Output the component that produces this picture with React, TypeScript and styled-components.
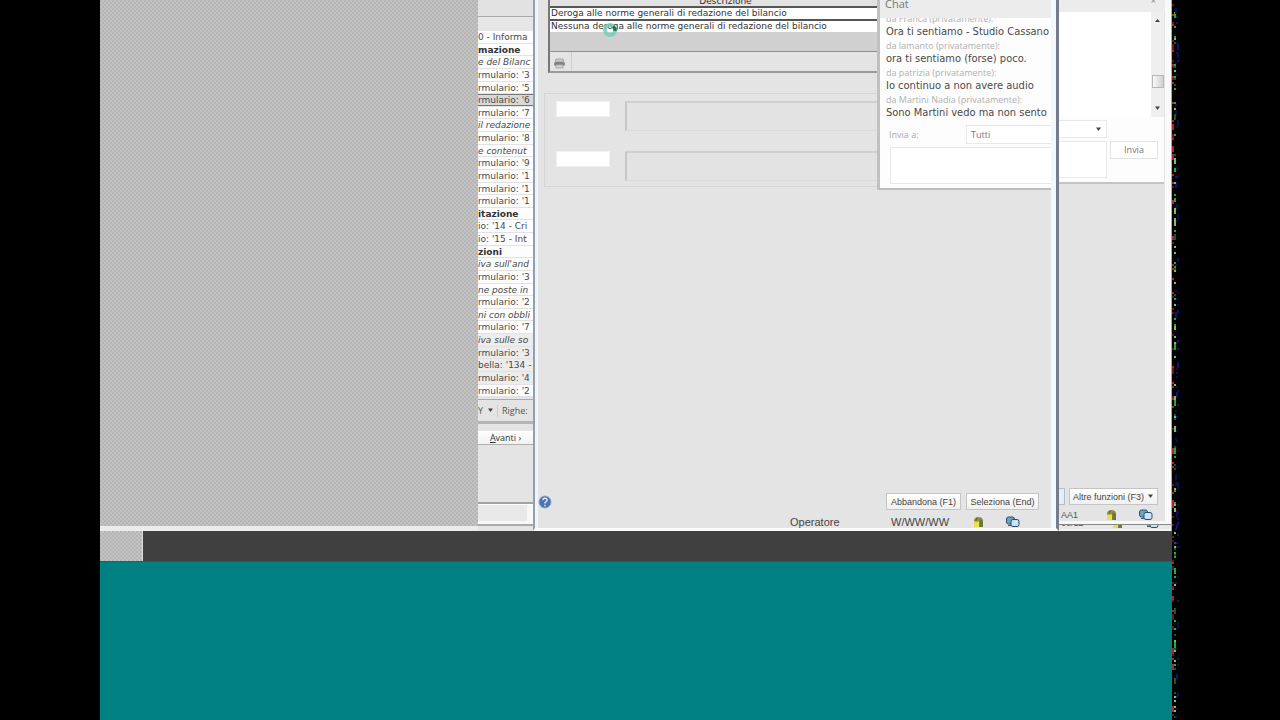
import React from 'react';
import styled, { createGlobalStyle, css } from 'styled-components';

const Global = createGlobalStyle`
  *, *::before, *::after { box-sizing: border-box; }
  body { margin: 0; background: #000; }
  button, input, textarea, select { font: inherit; color: inherit; margin: 0; padding: 0; border-radius: 0; }
  svg { display: block; flex: none; }
`;

const hatch = css`
  background-color: #bbb;
  background-image: conic-gradient(#c3c3c3 25%, #b5b5b5 0 50%, #c3c3c3 0 75%, #b5b5b5 0);
  background-size: 4px 4px;
`;

const Page = styled.div`
  display: flex;
  min-height: 100vh;
  padding-left: 100px;
  background: #000;
  font-family: 'DejaVu Sans', sans-serif;
  font-size: 9px;
  line-height: 12px;
  color: #333;
`;

const Desktop = styled.main`
  flex: 1;
  min-width: 0;
  display: flex;
  flex-direction: column;
`;

const Stage = styled.div`
  flex: 1;
  display: flex;
`;

const Backdrop = styled.div`
  flex: 0 0 378px;
  border-bottom: 5px solid #ececec;
  ${hatch}
`;

const Taskbar = styled.div`
  height: 31px;
  display: flex;
  background: #404040;
  border-bottom: 1px solid #2c5c5c;
`;

const TaskbarStart = styled.div`
  width: 43px;
  border-right: 1px solid #ddd;
  ${hatch}
`;

const Ground = styled.div`
  height: 158px;
  background: #008080;
`;

/* Tree window, mostly hidden on both sides */

const Tree = styled.section`
  flex: 0 0 55px;
  display: flex;
  flex-direction: column;
  overflow: hidden;
  white-space: nowrap;
  background: #e4e4e4;
`;

const TreeHead = styled.div`
  height: 31px;
  flex: none;
  background: linear-gradient(#e2e2e2 16px, #a8a8a8 16px 17px, #e6e6e6 17px);
`;

const TreeList = styled.ul`
  flex: none;
  height: 366px;
  margin: 0;
  padding: 0;
  list-style: none;
  display: flex;
  flex-direction: column;
`;

type Kind = 'item' | 'head' | 'note';

const TreeItem = styled.li<{ $kind: Kind; $selected?: boolean; $dim?: boolean }>`
  flex: 1 1 0;
  min-height: 0;
  overflow: hidden;
  border-bottom: 1px solid #e2e2e2;
  background: ${(p) => (p.$selected ? '#d8d8d8' : p.$dim ? '#ececec' : '#fdfdfd')};
  color: ${(p) => (p.$kind === 'head' ? '#333' : '#4a4a4a')};
  font-weight: ${(p) => (p.$kind === 'head' ? 700 : 400)};
  font-style: ${(p) => (p.$kind === 'note' ? 'italic' : 'normal')};
  ${(p) => p.$selected && css`box-shadow: inset 0 1px #777, inset 0 -1px #777;`}
`;

const TreeFoot = styled.div`
  height: 25px;
  flex: none;
  display: flex;
  align-items: center;
  gap: 4px;
  margin-top: 2px;
  border-top: 1px solid #aaa;
  border-bottom: 3px solid #b4b4b4;
  font-family: 'Open Sans', sans-serif;
  color: #555;
`;

const TreeFilter = styled.span`
  display: flex;
  align-items: center;
  gap: 4px;
  padding-right: 3px;
  border-right: 1px solid #ccc;
`;

const NextButton = styled.button`
  height: 14px;
  flex: none;
  margin-top: 7px;
  border: 0;
  border-bottom: 1px solid #b0b0b0;
  background: linear-gradient(#fff, #f2f2f2);
  font-family: 'Open Sans', sans-serif;
  text-align: center;
  line-height: 12px;
`;

const TreeStatus = styled.div`
  height: 24px;
  margin-top: auto;
  margin-bottom: 5px;
  border-top: 2px solid #a4a4a4;
  border-bottom: 2px solid #aaa;
  background: #e9e9e9;
  box-shadow: inset 0 1px #fff, inset 0 -3px #f8f8f8, inset -6px 0 #f8f8f8;
`;

/* Selection dialog */

const Dialog = styled.section`
  flex: 1;
  min-width: 0;
  display: flex;
  flex-direction: column;
  background: #e4e4e4;
  border-left: 2px solid #91a0ac;
  border-right: 3px solid #757c8c;
  border-bottom: 3px solid #fafafa;
  box-shadow: inset 3px 0 #eef5fd, inset -5px 0 #f2f8fc;
`;

const DialogTop = styled.div`
  display: flex;
  align-items: flex-start;
  padding-right: 5px;
`;

const DialogForm = styled.div`
  flex: 1;
  min-width: 0;
  padding-left: 9px;
`;

const Grid = styled.div`
  margin-left: 4px;
  border-left: 2px solid #777;
  border-bottom: 2px solid #9a9a9a;
  background: #d0d0d0;
`;

const Table = styled.table`
  width: 100%;
  border-collapse: collapse;
  text-align: left;
`;

const HeaderCell = styled.th`
  padding: 0 0 0 24px;
  font-weight: 400;
  background: #e2e2e2;
`;

const HeaderText = styled.div`
  height: 6px;
  display: flex;
  align-items: flex-end;
  justify-content: center;
  overflow: hidden;
  line-height: 10px;
`;

const Cell = styled.td<{ $active?: boolean }>`
  height: 12px;
  padding: 0 0 0 1px;
  line-height: 11px;
  background: #fff;
  color: #333;
  ${(p) => p.$active && css`border-top: 2px solid #555; border-bottom: 2px solid #555;`}
`;

const GridTools = styled.div`
  height: 20px;
  margin-top: 19px;
  border-top: 1px solid #909090;
  background: #e4e4e4;
`;

const PrintButton = styled.button`
  display: flex;
  align-items: center;
  justify-content: center;
  width: 22px;
  height: 19px;
  padding: 4px 3px 0 0;
  border: 0;
  border-right: 1px solid #d0d0d0;
  background: transparent;
`;

const Fields = styled.div`
  display: flex;
  flex-direction: column;
  gap: 20px;
  margin-top: 20px;
  padding: 7px 0 5px 11px;
  border: 1px solid #d6d6d6;
  border-right: 0;
`;

const FieldRow = styled.div`
  display: flex;
  align-items: flex-start;
  gap: 15px;
`;

const Code = styled.input`
  width: 54px;
  height: 16px;
  border: 1px solid #f2f2f2;
  background: #fff;
`;

const Description = styled.output`
  flex: 1;
  height: 30px;
  border-top: 2px solid #cfcfcf;
  border-left: 2px solid #c6c6c6;
  border-bottom: 1px solid #dadada;
  background: #e3e3e3;
`;

/* Chat window */

const Chat = styled.aside`
  flex: 0 0 174px;
  height: 190px;
  overflow: hidden;
  white-space: nowrap;
  border-left: 3px solid #c0c0c0;
  border-bottom: 2px solid #bdbdbd;
  background: #fdfdfd;
  font-family: 'Open Sans', sans-serif;
`;

const ChatTitle = styled.h2`
  height: 18px;
  margin: 0;
  padding-left: 5px;
  background: #ececec;
  color: #777;
  font-size: 11px;
  font-weight: 400;
  line-height: 8px;
`;

const ChatLog = styled.div`
  height: 104px;
  display: flex;
  flex-direction: column;
  justify-content: flex-end;
  overflow: hidden;
  margin-bottom: 3px;
  padding: 0 0 2px 6px;
`;

const Sender = styled.p`
  flex: none;
  margin: 0;
  font-size: 9px;
  line-height: 13px;
  color: #b0b0b0;
`;

const Message = styled.p`
  flex: none;
  margin: 0;
  font-family: 'DejaVu Sans Condensed', 'Open Sans', sans-serif;
  font-size: 11px;
  line-height: 14px;
  color: #4a4a4a;
`;

const SendTo = styled.div`
  display: flex;
  height: 19px;
  align-items: center;
  justify-content: space-between;
  padding-left: 9px;
  color: #aaa;
`;

const Recipient = styled.select`
  width: 85px;
  height: 19px;
  padding-left: 4px;
  appearance: none;
  border: 1px solid #e8e8e8;
  border-right: 0;
  background: #fff;
  color: #777;
`;

const ChatInput = styled.textarea<{ $cut?: boolean }>`
  display: block;
  resize: none;
  height: 37px;
  background: #fff;
  border: 1px solid #e8e8e8;
  ${(p) =>
    p.$cut
      ? css`width: 48px; border-left: 0;`
      : css`width: 161px; margin: 3px 0 0 10px; border-right: 0;`}
`;

const DialogFoot = styled.footer`
  margin-top: auto;
  padding: 0 17px 0 3px;
  font-family: 'Liberation Sans', sans-serif;
`;

const Actions = styled.div`
  display: flex;
  align-items: center;
  gap: 5px;
`;

const HelpButton = styled.button`
  display: flex;
  margin-right: auto;
  border: 0;
  background: transparent;
`;

const PushButton = styled.button<{ $width: number }>`
  width: ${(p) => p.$width}px;
  height: 17px;
  display: flex;
  align-items: center;
  justify-content: center;
  gap: 3px;
  border: 1px solid #c4c4c4;
  background: linear-gradient(#fff, #f0f0f0);
  color: #444;
  font-family: 'Liberation Sans', sans-serif;
  font-size: 9px;
  white-space: nowrap;
`;

const StatusBar = styled.div`
  display: flex;
  align-items: center;
  justify-content: flex-end;
  height: 13px;
  margin-top: 5px;
  padding-right: 19px;
  font-size: 11px;
  color: #444;
`;

const Operator = styled.span`
  width: 101px;
`;

const UserName = styled.span`
  width: 82px;
`;

const StatusIcons = styled.span<{ $gap: number }>`
  display: flex;
  align-items: center;
  gap: ${(p) => p.$gap}px;
`;

/* Windows behind the dialog, to its right */

const Behind = styled.section`
  flex: 0 0 113px;
  display: flex;
  flex-direction: column;
  overflow: hidden;
  background: #e4e4e4;
  border-right: 1px solid #aaa;
  box-shadow: inset -6px 0 #fafafa;
  font-family: 'Open Sans', sans-serif;
`;

const BehindTitle = styled.div`
  height: 12px;
  margin-right: 6px;
  padding-right: 9px;
  background: #ececec;
  color: #888;
  text-align: right;
  line-height: 1px;
`;

const BehindLog = styled.div`
  height: 105px;
  margin-right: 7px;
  display: flex;
  justify-content: flex-end;
  background: #fff;
`;

const Scroll = styled.div`
  width: 13px;
  display: flex;
  flex-direction: column;
  align-items: center;
  padding: 6px 0 6px;
  background: #efefef;
`;

const Thumb = styled.div`
  width: 12px;
  height: 13px;
  margin: auto 0 18px;
  border: 1px solid #b8b8b8;
  background: linear-gradient(90deg, #fafafa, #d0d0d0);
`;

const BehindForm = styled.div`
  height: 67px;
  margin-right: 7px;
  padding: 3px 6px 0 0;
  background: #fdfdfd;
  border-bottom: 2px solid #c4c4c4;
`;

const DropEnd = styled.button`
  width: 48px;
  height: 18px;
  margin-bottom: 3px;
  padding-right: 4px;
  display: flex;
  align-items: center;
  justify-content: flex-end;
  border: 1px solid #e8e8e8;
  border-left: 0;
  background: #fff;
`;

const SendRow = styled.div`
  display: flex;
  justify-content: space-between;
  align-items: flex-start;
`;

const SendButton = styled.button`
  width: 48px;
  height: 18px;
  border: 1px solid #e2e2e2;
  background: #fff;
  color: #777;
`;

const BehindFoot = styled.div`
  margin-top: auto;
  padding-right: 13px;
  display: flex;
  justify-content: space-between;
`;

const ButtonEnd = styled.div`
  width: 6px;
  height: 17px;
  border: 1px solid #b4c0c8;
  border-left: 0;
  background: #e6eef4;
`;

const BehindStatus = styled.div`
  height: 17px;
  margin-top: 2px;
  padding: 2px 18px 0 2px;
  display: flex;
  align-items: center;
  justify-content: space-between;
  overflow: hidden;
  border-bottom: 3px solid #f8f8f8;
  font-family: 'Liberation Sans', sans-serif;
  color: #555;
`;

const LastStatus = styled.div`
  height: 7px;
  display: flex;
  align-items: flex-end;
  justify-content: space-between;
  padding: 0 12px 0 2px;
  overflow: hidden;
  border-top: 1px solid #888;
  border-bottom: 2px solid #f2f2f2;
  background: #e8e8e8;
  font-family: 'Liberation Sans', sans-serif;
  color: #555;
`;

const NoiseStrip = styled.div`
  flex: 0 0 108px;
`;

const Pointer = styled.svg`
  position: absolute;
  top: 22px;
  left: 602px;
`;

const Arrow = ({ up = false }: { up?: boolean }) => (
  <svg width="7" height="5" viewBox="0 0 7 5" aria-hidden="true">
    <path d={up ? 'M1 4 3.500 1 6 4Z' : 'M1 0.500h5L3.500 4Z'} fill="#444" />
  </svg>
);

const Padlock = () => (
  <svg width="11" height="12" viewBox="0 0 11 12" aria-hidden="true">
    <path d="M1 11V5Q1 1 5.500 1T10 5v6Z" fill="#8f9440" />
    <path d="M1 5.500h5V11H1Z" fill="#e3e34a" />
    <path d="M3 5V4q0-2 2-2" stroke="#59602c" fill="none" />
    <path d="M6.500 3v8H10V5Z" fill="#6e7440" />
  </svg>
);

const Screens = () => (
  <svg width="14" height="12" viewBox="0 0 14 12" aria-hidden="true">
    <rect x="0.500" y="1" width="8" height="7" rx="2" fill="#6fa3c4" stroke="#2c5068" />
    <rect x="5" y="3.500" width="8" height="7" rx="2" fill="#c9e4f4" stroke="#2c4c66" />
    <path d="M2 9.500h3" stroke="#37566b" />
  </svg>
);

const Printer = () => (
  <svg width="13" height="11" viewBox="0 0 13 11" aria-hidden="true">
    <path d="M3 1h7l1 3H2Z" fill="#c8c8c8" stroke="#aaa" />
    <rect x="1" y="4" width="11" height="4" rx="2" fill="#808080" />
    <path d="M3 7h7v3H3Z" fill="#d4d4d4" stroke="#aaa" />
  </svg>
);

const Help = () => (
  <svg width="14" height="14" viewBox="0 0 14 14" aria-hidden="true">
    <circle cx="7" cy="7" r="6" fill="#4a73b0" stroke="#8ba6cc" />
    <path d="M4.800 5.200Q5 3.200 7 3.200t2.200 1.800Q9.200 6.200 7 7.600V8.600M7 9.800v1.400" stroke="#e4ecf8" strokeWidth="1.400" fill="none" />
  </svg>
);

const noiseColors = ['#c01838', '#20b030', '#101080', '#80c060', '#701018', '#0c0c50', '#145c20'];

const noise = (() => {
  let seed = 77;
  const next = () => {
    seed = (seed * 1103515245 + 12345) % 2147483648;
    return seed / 2147483648;
  };
  return Array.from({ length: 300 }, () => {
    const color = Math.floor(next() * noiseColors.length);
    const blue = color === 2 || color === 5;
    const red = color === 0 || color === 4;
    return {
      x: blue ? 3 + Math.floor(next() * 3) : red ? 0 : 2,
      y: Math.floor(next() * 360) * 2,
      h: next() > 0.85 ? 6 : 2,
      fill: noiseColors[color],
    };
  });
})();

const tree: { text: string; kind?: Kind }[] = [
  { text: '0 - Informa' },
  { text: 'mazione', kind: 'head' },
  { text: 'e del Bilanc', kind: 'note' },
  { text: "rmulario: '3" },
  { text: "rmulario: '5" },
  { text: "rmulario: '6" },
  { text: "rmulario: '7" },
  { text: 'il redazione', kind: 'note' },
  { text: "rmulario: '8" },
  { text: 'e contenut', kind: 'note' },
  { text: "rmulario: '9" },
  { text: "rmulario: '1" },
  { text: "rmulario: '1" },
  { text: "rmulario: '1" },
  { text: 'itazione', kind: 'head' },
  { text: "io: '14 - Cri" },
  { text: "io: '15 - Int" },
  { text: 'zioni', kind: 'head' },
  { text: "iva sull'and", kind: 'note' },
  { text: "rmulario: '3" },
  { text: 'ne poste in', kind: 'note' },
  { text: "rmulario: '2" },
  { text: 'ni con obbli', kind: 'note' },
  { text: "rmulario: '7" },
  { text: 'iva sulle so', kind: 'note' },
  { text: "rmulario: '3" },
  { text: "bella: '134 -" },
  { text: "rmulario: '4" },
  { text: "rmulario: '2" },
];

export default function App() {
  return (
    <Page>
      <Global />
      <Desktop>
        <Stage>
          <Backdrop />
          <Tree>
            <TreeHead />
            <TreeList>
              {tree.map((row, i) => (
                <TreeItem key={i} $kind={row.kind ?? 'item'} $selected={i === 5} $dim={i >= 24 && i < 28}>
                  {row.text}
                </TreeItem>
              ))}
            </TreeList>
            <TreeFoot>
              <TreeFilter>
                Y
                <Arrow />
              </TreeFilter>
              Righe:
            </TreeFoot>
            <NextButton type="button">
              <u>A</u>vanti ›
            </NextButton>
            <TreeStatus />
          </Tree>
          <Dialog>
            <DialogTop>
              <DialogForm>
                <Grid>
                  <Table>
                    <thead>
                      <tr>
                        <HeaderCell>
                          <HeaderText>Descrizione</HeaderText>
                        </HeaderCell>
                      </tr>
                    </thead>
                    <tbody>
                      <tr>
                        <Cell $active>Deroga alle norme generali di redazione del bilancio</Cell>
                      </tr>
                      <tr>
                        <Cell>Nessuna deroga alle norme generali di redazione del bilancio</Cell>
                      </tr>
                    </tbody>
                  </Table>
                  <GridTools>
                    <PrintButton type="button" aria-label="Stampa">
                      <Printer />
                    </PrintButton>
                  </GridTools>
                </Grid>
                <Fields>
                  <FieldRow>
                    <Code aria-label="Codice 1" />
                    <Description />
                  </FieldRow>
                  <FieldRow>
                    <Code aria-label="Codice 2" />
                    <Description />
                  </FieldRow>
                </Fields>
              </DialogForm>
              <Chat>
                <ChatTitle>Chat</ChatTitle>
                <ChatLog>
                  <Sender>da Franca (privatamente):</Sender>
                  <Message>Ora ti sentiamo - Studio Cassano</Message>
                  <Sender>da lamanto (privatamente):</Sender>
                  <Message>ora ti sentiamo (forse) poco.</Message>
                  <Sender>da patrizia (privatamente):</Sender>
                  <Message>Io continuo a non avere audio</Message>
                  <Sender>da Martini Nadia (privatamente):</Sender>
                  <Message>Sono Martini vedo ma non sento</Message>
                </ChatLog>
                <SendTo>
                  <label htmlFor="recipient">Invia a:</label>
                  <Recipient id="recipient">
                    <option>Tutti</option>
                  </Recipient>
                </SendTo>
                <ChatInput aria-label="Messaggio" />
              </Chat>
            </DialogTop>
            <DialogFoot>
              <Actions>
                <HelpButton type="button" aria-label="Aiuto">
                  <Help />
                </HelpButton>
                <PushButton type="button" $width={75}>Abbandona (F1)</PushButton>
                <PushButton type="button" $width={73}>Seleziona (End)</PushButton>
              </Actions>
              <StatusBar>
                <Operator>Operatore</Operator>
                <UserName>W/WW/WW</UserName>
                <StatusIcons $gap={22}>
                  <Padlock />
                  <Screens />
                </StatusIcons>
              </StatusBar>
            </DialogFoot>
          </Dialog>
          <Behind>
            <BehindTitle>×</BehindTitle>
            <BehindLog>
              <Scroll>
                <Arrow up />
                <Thumb />
                <Arrow />
              </Scroll>
            </BehindLog>
            <BehindForm>
              <DropEnd type="button" aria-label="Destinatari">
                <Arrow />
              </DropEnd>
              <SendRow>
                <ChatInput $cut aria-label="Testo" />
                <SendButton type="button">Invia</SendButton>
              </SendRow>
            </BehindForm>
            <BehindFoot>
              <ButtonEnd />
              <PushButton type="button" $width={89}>
                Altre funzioni (F3)
                <Arrow />
              </PushButton>
            </BehindFoot>
            <BehindStatus>
              AA1
              <StatusIcons $gap={22}>
                <Padlock />
                <Screens />
              </StatusIcons>
            </BehindStatus>
            <LastStatus>
              00/12
              <StatusIcons $gap={22}>
                <Padlock />
                <Screens />
              </StatusIcons>
            </LastStatus>
          </Behind>
        </Stage>
        <Taskbar>
          <TaskbarStart />
        </Taskbar>
        <Ground />
      </Desktop>
      <NoiseStrip>
        <svg width="8" height="720" viewBox="0 0 8 720" shapeRendering="crispEdges" aria-hidden="true">
          {noise.map((n, i) => (
            <rect key={i} x={n.x} y={n.y} width="2" height={n.h} fill={n.fill} />
          ))}
        </svg>
      </NoiseStrip>
      <Pointer width="16" height="16" viewBox="0 0 16 16" aria-hidden="true">
        <circle cx="8" cy="8" r="5" fill="none" stroke="#6fd0b8" strokeWidth="4" opacity="0.85" />
        <path d="M11 4.500A5 5 0 0 1 13 9" fill="none" stroke="#23705f" strokeWidth="3" />
      </Pointer>
    </Page>
  );
}
